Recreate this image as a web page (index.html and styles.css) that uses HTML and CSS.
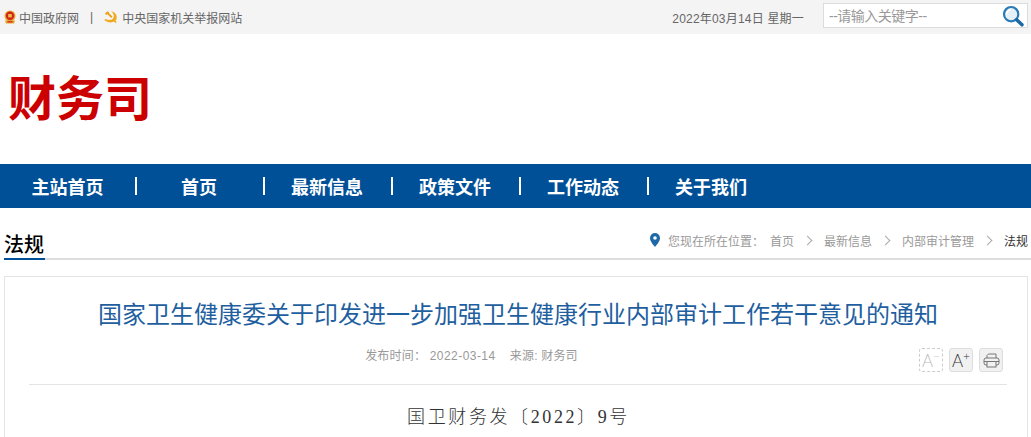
FILE: index.html
```html
<!DOCTYPE html>
<html lang="zh-CN">
<head>
  <meta charset="UTF-8">
  <title>财务司</title>
  <link rel="stylesheet" href="styles.css">
</head>
<body>
  <!-- Top bar -->
  <div class="topbar">
    <div class="top-links">
      <a href="#" class="top-link">
        <svg class="emblem" width="12" height="14" viewBox="0 0 12 14">
          <circle cx="6" cy="6" r="5.500" fill="#e9a92e"/>
          <circle cx="6" cy="5.800" r="4.200" fill="#d2231c"/>
          <rect x="4.200" y="4" width="3.600" height="3.400" fill="#efc04a"/>
          <path d="M1 10.500h10l-.8 3H1.800z" fill="#e5a52f"/>
          <rect x="3.500" y="11.200" width="5" height="1.300" fill="#d2231c"/>
        </svg>
        中国政府网
      </a>
      <span class="top-sep">|</span>
      <a href="#" class="top-link">
        <svg class="party" width="13" height="12" viewBox="0 0 13 12">
          <path d="M3.200.4.900 2.700 2.300 4l1-.9 3.900 3.800 1.300-1.400-3.900-3.700.8-.8z" fill="#ef9f16"/>
          <path d="M7 .3c3.200.3 5.700 2.900 5.700 5.900 0 1.400-.5 2.600-1.300 3.500l1.300 1.300-1.200 1-1.500-1.400C7.600 12 3.300 11.700.3 9.100l1.200-1.200c2.400 1.300 5.700 1.400 7.400-.2 1.700-2 1-5.200-1.900-7.400z" fill="#f0a81c"/>
        </svg>
        中央国家机关举报网站
      </a>
    </div>
    <div class="top-right">
      <span class="today">2022年03月14日 星期一</span>
      <form class="search">
        <input type="text" placeholder="--请输入关键字--">
        <button type="button" aria-label="搜索">
          <svg width="22" height="22" viewBox="0 0 24 24">
            <circle cx="10" cy="10" r="7.800" fill="#e6f0f7" stroke="#2a7ab5" stroke-width="2.400"/>
            <path d="M5 10c.3-2.600 2.200-4.600 4.800-5" fill="none" stroke="#fff" stroke-width="1.600"/>
            <path d="M16 16l5.800 5.600" stroke="#1b6aa5" stroke-width="3.800" stroke-linecap="round"/>
          </svg>
        </button>
      </form>
    </div>
  </div>

  <!-- Logo -->
  <div class="logo-row">
    <h1 class="logo">财务司</h1>
  </div>

  <!-- Main nav -->
  <nav class="mainnav">
    <a href="#" class="first">主站首页</a><i></i>
    <a href="#">首页</a><i></i>
    <a href="#">最新信息</a><i></i>
    <a href="#">政策文件</a><i></i>
    <a href="#">工作动态</a><i></i>
    <a href="#">关于我们</a>
  </nav>

  <!-- Section heading + breadcrumb -->
  <div class="section-head">
    <h2>法规</h2>
    <div class="crumbs">
      <svg class="pin" width="10" height="14" viewBox="0 0 10 14">
        <path fill-rule="evenodd" d="M5 0a5 5 0 0 1 5 5c0 3.200-3 6.500-5 9-2-2.500-5-5.800-5-9a5 5 0 0 1 5-5zm0 3.200a1.800 1.800 0 1 0 0 3.600 1.800 1.800 0 0 0 0-3.600z" fill="#1f69a8"/>
      </svg>
      <span class="here">您现在所在位置：</span>
      <a href="#">首页</a><b class="arrow"></b>
      <a href="#">最新信息</a><b class="arrow"></b>
      <a href="#">内部审计管理</a><b class="arrow"></b>
      <span class="current">法规</span>
    </div>
  </div>

  <!-- Article -->
  <div class="article">
    <h3 class="article-title">国家卫生健康委关于印发进一步加强卫生健康行业内部审计工作若干意见的通知</h3>
    <div class="meta-row">
      <p class="meta">发布时间： <span class="pubdate">2022-03-14</span> &nbsp;&nbsp; 来源: 财务司</p>
      <div class="tools">
        <span class="tool disabled">A<sup>−</sup></span>
        <span class="tool">A<sup>+</sup></span>
        <span class="tool">
          <svg width="17" height="15" viewBox="0 0 17 15" fill="none" stroke="#777" stroke-width="1">
            <path d="M4 5V2.500L5.500 1h7.500v4"/>
            <rect x="1" y="5" width="15" height="7" rx="2"/>
            <path d="M1 8.500h15"/>
            <rect x="4" y="8.500" width="9" height="5.500" fill="#f1f1f1"/>
          </svg>
        </span>
      </div>
    </div>
    <p class="doc-no">国卫财务发〔2022〕9号</p>
  </div>
</body>
</html>
```

FILE: styles.css
```css
* {
  margin: 0;
  padding: 0;
  box-sizing: border-box;
}

html, body {
  height: 437px;
  overflow: hidden;
}

body {
  background-color: #fff;
  font-family: "Liberation Sans", "Noto Sans CJK SC", sans-serif;
  font-size: 12px;
  color: #666;
}

a {
  color: inherit;
  text-decoration: none;
}

/* Top bar */
.topbar {
  display: flex;
  justify-content: space-between;
  align-items: center;
  height: 34px;
  padding: 0 3px 0 4px;
  background-color: #f4f4f4;
}

.top-links {
  display: flex;
  align-items: center;
}

.top-link {
  display: flex;
  align-items: center;
}

.emblem {
  margin-right: 3px;
}

.top-sep {
  margin: 0 11px;
  color: #666;
}

.party {
  margin-right: 5px;
}

.top-right {
  display: flex;
  align-items: center;
}

.today {
  margin-right: 19px;
  letter-spacing: .2px;
}

.search {
  display: flex;
  align-items: center;
  width: 205px;
  height: 25px;
  margin-top: -3px;
  background-color: #fff;
  border: 1px solid #dcdcdc;
}

.search input {
  flex: 1;
  min-width: 0;
  height: 100%;
  padding-left: 5px;
  border: none;
  outline: none;
  font-family: inherit;
  font-size: 14px;
  letter-spacing: -.5px;
}

.search input::placeholder {
  color: #999;
  opacity: 1;
}

.search button {
  display: flex;
  width: 25px;
  border: none;
  background: none;
}

/* Logo */
.logo-row {
  height: 130px;
  padding: 38px 0 0 8px;
}

.logo {
  font-size: 48px;
  line-height: 56px;
  font-weight: 700;
  color: #cc0000;
}

/* Main nav */
.mainnav {
  display: flex;
  align-items: center;
  height: 44px;
  background-color: #005098;
}

.mainnav a {
  width: 126px;
  padding-right: 2px;
  text-align: center;
  font-size: 18px;
  font-weight: 700;
  color: #fff;
}

.mainnav a.first {
  width: 135px;
  padding-right: 0;
}

.mainnav i {
  width: 2px;
  height: 18px;
  background-color: #fff;
}

/* Section heading */
.section-head {
  display: flex;
  justify-content: space-between;
  align-items: flex-end;
  height: 52px;
  margin: 0 0 0 4px;
  border-bottom: 2px solid #ddd;
}

.section-head h2 {
  margin-bottom: -2px;
  padding-right: 1px;
  font-size: 20px;
  line-height: 26px;
  font-weight: 500;
  color: #000;
  border-bottom: 2px solid #005098;
}

.crumbs {
  display: flex;
  align-items: center;
  height: 36px;
  padding-right: 3px;
  color: #999;
}

.pin {
  margin-right: 8px;
}

.here {
  margin-right: 1px;
  width: 101px;
}

.arrow {
  width: 7px;
  height: 7px;
  margin: 0 13px 0 10px;
  border-top: 1px solid #aaa;
  border-right: 1px solid #aaa;
  transform: rotate(45deg);
}

.current {
  color: #333;
}

/* Article */
.article {
  height: 161px;
  margin: 16px 3px 0 4px;
  padding: 0 20px 0 24px;
  border: 1px solid #e4e4e4;
  border-bottom: none;
}

.article-title {
  padding-top: 21px;
  font-size: 24px;
  line-height: 34px;
  font-weight: 400;
  color: #1f5f9f;
  text-align: center;
}

.meta-row {
  position: relative;
  height: 53px;
  padding-top: 14px;
  border-bottom: 1px solid #e4e4e4;
}

.meta {
  padding-right: 93px;
  line-height: 20px;
  letter-spacing: .2px;
  color: #999;
  text-align: center;
}

.pubdate {
  letter-spacing: .45px;
}

.tools {
  position: absolute;
  right: 4px;
  top: 16px;
  display: flex;
  gap: 6px;
}

.tool {
  display: flex;
  justify-content: center;
  align-items: center;
  width: 24px;
  height: 24px;
  background-color: #f1f1f1;
  border: 1px solid #ddd;
  border-radius: 3px;
  font-family: Lato, sans-serif;
  font-size: 17px;
  font-weight: 300;
  color: #333;
}

.tool sup {
  font-size: 12px;
  line-height: 1;
  margin-top: -8px;
}

.tool.disabled {
  background-color: #fff;
  border: 1px dashed #ccc;
  color: #bbb;
}

.doc-no {
  margin-top: 19px;
  padding-left: 1px;
  font-family: "Liberation Serif", "Noto Sans CJK SC", serif;
  font-size: 18px;
  font-weight: 300;
  line-height: 26px;
  letter-spacing: 2.600px;
  color: #333;
  text-align: center;
}
```
